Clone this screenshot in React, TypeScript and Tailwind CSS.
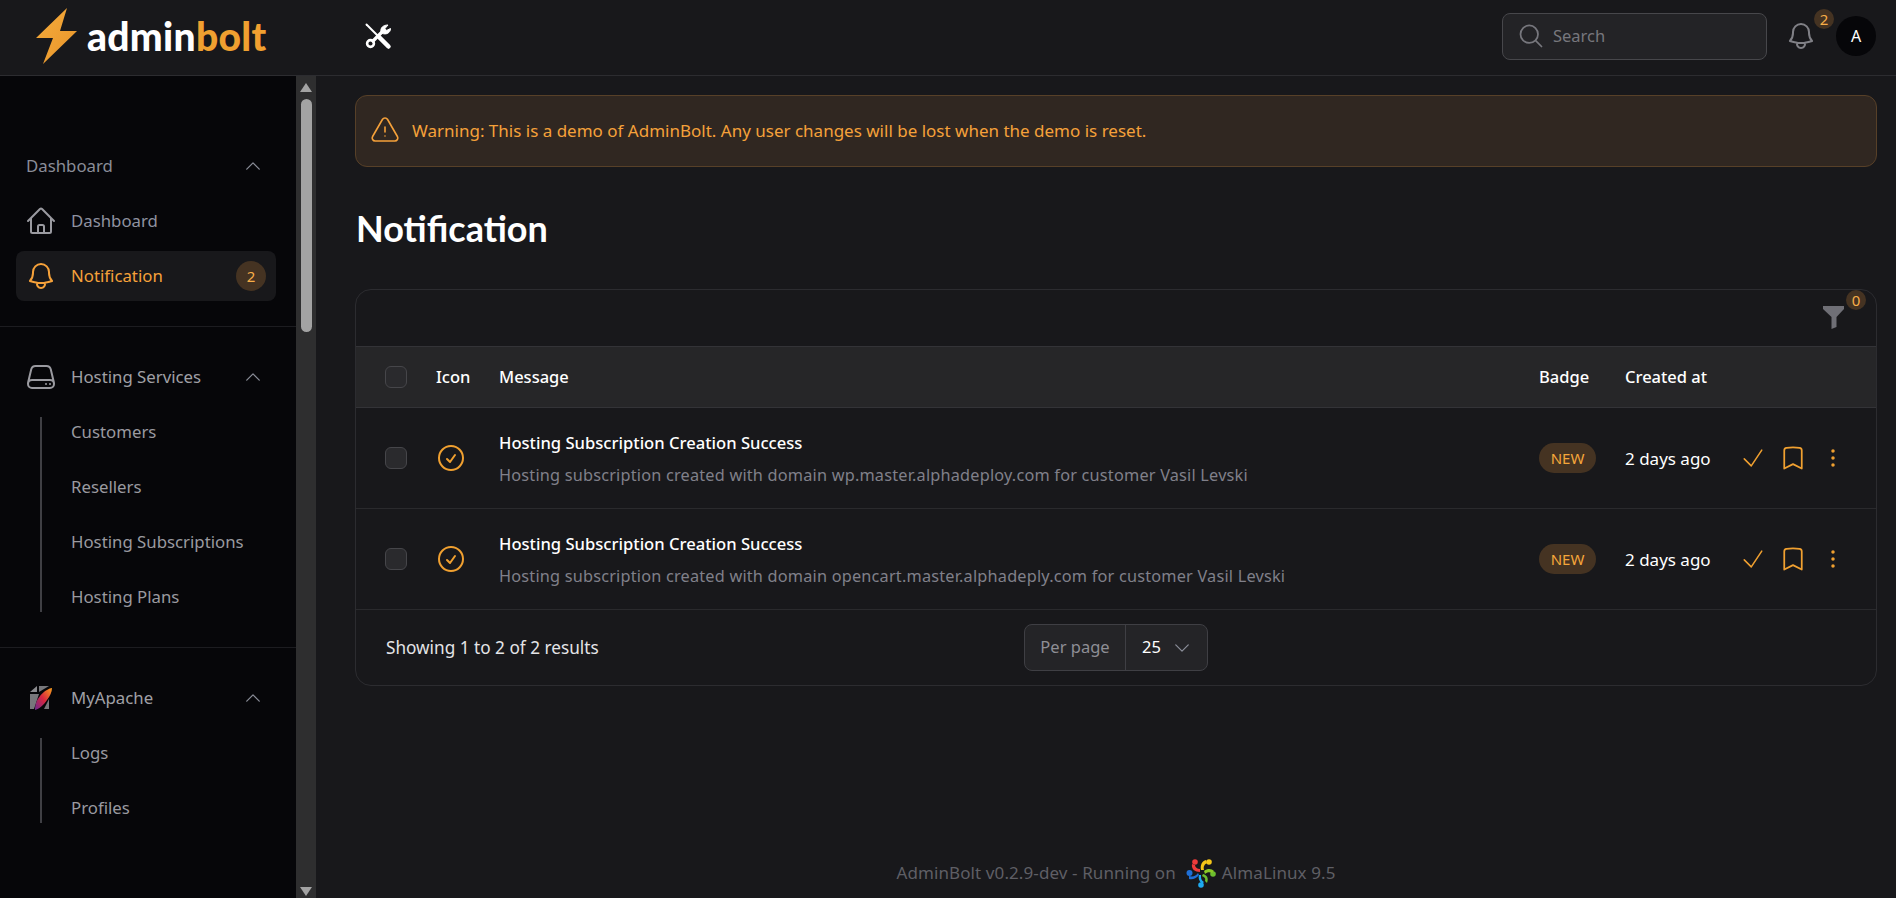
import React from 'react';
import {
  HiEllipsisVertical,
  HiOutlineBell,
  HiOutlineBookmark,
  HiOutlineCheck,
  HiOutlineCheckCircle,
  HiOutlineChevronDown,
  HiOutlineChevronUp,
  HiOutlineExclamationTriangle,
  HiOutlineHome,
  HiOutlineMagnifyingGlass,
  HiOutlineServer,
} from 'react-icons/hi2';

const BoltMark = () => (
  <svg width="41" height="56" viewBox="0 0 41 56" className="shrink-0">
    <defs>
      <linearGradient id="bolt" x1="0" y1="0" x2="1" y2="1">
        <stop offset="0" stopColor="#f5ac3c" />
        <stop offset="1" stopColor="#e8942a" />
      </linearGradient>
    </defs>
    <path d="M31 0 L0 30 L17 30 L7 56 L41 23 L24 23 Z" fill="url(#bolt)" />
  </svg>
);

const ToolsIcon = () => (
  <svg width="28" height="28" viewBox="0 0 28 28" fill="none" stroke="#fff" strokeLinecap="round" className="shrink-0">
    <path d="M2.5 2.5 L14 14" strokeWidth="2" />
    <path d="M15.5 15.5 L24.5 24.5" strokeWidth="4.5" />
    <circle cx="6.5" cy="21.5" r="3.4" strokeWidth="2.6" />
    <path d="M9 19 L18 10" strokeWidth="3.2" />
    <path d="M17 10 C16 6 19 3 24 3 L21 6.5 L22.5 8.5 L26.5 6.5 C26.5 11 22 13 18.5 11.5 Z" fill="#fff" strokeWidth="1" />
  </svg>
);

const ApacheIcon = () => (
  <svg width="24" height="26" viewBox="0 0 24 26">
    <defs>
      <linearGradient id="feather" x1="1" y1="0" x2="0" y2="1">
        <stop offset="0" stopColor="#f7a01c" />
        <stop offset="0.5" stopColor="#d9263f" />
        <stop offset="1" stopColor="#6b2a90" />
      </linearGradient>
    </defs>
    <path d="M1 7 L8 1 V7 Z" fill="#8a8a8e" />
    <path d="M1 9 H10 L5 24 H1 Z" fill="#77777b" />
    <path d="M10 1 H20 L10 7 Z" fill="#77777b" />
    <path d="M15 24 H20 V14 Z" fill="#77777b" />
    <path d="M23 3 C17 4 10 10 7 18 C6 21 6 24 6 25 C10 24 15 20 18 15 C21 11 23 7 23 3 Z" fill="url(#feather)" />
  </svg>
);

const AlmaLogo = () => (
  <svg width="30" height="30" viewBox="0 0 30 30">
    <circle cx="9" cy="4" r="2.8" fill="#ee3b3b" />
    <path d="M6 6 C5 11 9 14 14 14 L14 11 C11 11 9 9 9 7 Z" fill="#ee3b3b" />
    <circle cx="23" cy="4" r="2.8" fill="#f5c518" />
    <path d="M15 12 C14 7 16 3 20 2 L21 5 C19 6 17 8 18 12 Z" fill="#f5c518" />
    <circle cx="27" cy="16" r="2.8" fill="#6cbe2e" />
    <path d="M18 13 C22 10 26 11 28 13 L26 15 C24 14 21 14 19 16 Z" fill="#8ac926" />
    <path d="M17 16 C21 17 23 20 21 25 L19 23 C20 20 18 19 16 18 Z" fill="#6cbe2e" />
    <circle cx="15" cy="27" r="2.8" fill="#1eaaf1" />
    <path d="M15 17 C15 20 15 22 18 24 L16 26 C13 23 12 20 13 17 Z" fill="#1eaaf1" />
    <circle cx="3.5" cy="15" r="3" fill="#1f6fd6" />
    <path d="M3 18 C7 19 10 18 12 15 L13 17 C10 21 6 22 3 21 Z" fill="#1f6fd6" />
  </svg>
);

const FunnelIcon = () => (
  <svg width="21" height="23" viewBox="0 0 21 23" className="block">
    <path d="M0 0 H21 V3 L13.5 11 V21 L8.5 23 V11 L0 3 Z" fill="#6f6f76" />
  </svg>
);

const Checkbox = () => (
  <span className="block w-[22px] h-[22px] rounded-md border border-[#46464a] bg-[#2a2a2d]" />
);

const CountBadge = ({ value, className }: { value: number; className: string }) => (
  <span className={`flex items-center justify-center rounded-full bg-[#453322] text-[#f8ae48] ${className}`}>{value}</span>
);

const navGroups = [
  { title: 'Hosting Services', icon: <HiOutlineServer className="w-[32px] h-[32px] text-[#9a9aa0]" />, links: ['Customers', 'Resellers', 'Hosting Subscriptions', 'Hosting Plans'] },
  { title: 'MyApache', icon: <ApacheIcon />, links: ['Logs', 'Profiles'] },
];

const rows = [
  'Hosting subscription created with domain wp.master.alphadeploy.com for customer Vasil Levski',
  'Hosting subscription created with domain opencart.master.alphadeply.com for customer Vasil Levski',
];

const App = () => {
  return (
    <div className="h-screen overflow-hidden flex flex-col bg-[#18181b] font-['Noto_Sans',sans-serif] text-[16.5px]">
      <header className="h-[76px] shrink-0 flex items-center border-b border-[#2c2c30] pl-[36px] pr-[20px] pb-[3px]">
        <BoltMark />
        <span className="ml-[10px] text-[39px] leading-none font-black tracking-[0.3px] text-white font-['Lato',sans-serif]">
          admin<span className="text-[#f0a030]">bolt</span>
        </span>
        <span className="ml-[97px]"><ToolsIcon /></span>
        <div className="ml-auto flex items-center">
          <div className="w-[265px] h-[47px] flex items-center gap-[8px] pl-[14px] rounded-lg border border-[#47474b] bg-[#232326] text-[#77777d]">
            <HiOutlineMagnifyingGlass className="w-[28px] h-[28px]" />
            <span>Search</span>
          </div>
          <div className="relative ml-[18px] mr-[19px]">
            <HiOutlineBell className="w-[32px] h-[32px] text-[#808086]" />
            <CountBadge value={2} className="absolute -top-[11px] left-[29px] w-[20px] h-[20px] text-[15px]" />
          </div>
          <div className="w-[40px] h-[40px] rounded-full bg-[#060609] flex items-center justify-center text-white text-[16px]">A</div>
        </div>
      </header>

      <div className="flex-1 flex min-h-0">
        <aside className="w-[296px] shrink-0 bg-[#060609] pt-[73px] text-[16.8px]">
          <div className="pl-[16px] pr-[20px]">
            <div className="flex items-center justify-between pl-[10px] pr-[13px] h-[34px] text-[#8a8d98]">
              <span>Dashboard</span>
              <HiOutlineChevronUp className="w-[20px] h-[20px]" />
            </div>
            <div className="mt-[13px] h-[50px] flex items-center gap-[14px] pl-[9px] text-[#8f92a0]">
              <HiOutlineHome className="w-[32px] h-[32px] text-[#9a9aa0]" />
              <span>Dashboard</span>
            </div>
            <div className="mt-[5px] h-[50px] flex items-center gap-[14px] pl-[9px] pr-[10px] rounded-lg bg-[#18181b] text-[#f5a13a]">
              <HiOutlineBell className="w-[32px] h-[32px]" />
              <span>Notification</span>
              <CountBadge value={2} className="ml-auto w-[30px] h-[30px] text-[15px]" />
            </div>
          </div>
          {navGroups.map((group) => (
            <div key={group.title} className="mt-[25px] border-t border-[#1c1c20] pt-[33px] pb-[35px] -mb-[25px] pl-[16px] pr-[20px]">
              <div className="flex items-center h-[34px] gap-[14px] pl-[9px] pr-[13px] text-[#a0a0a6]">
                <span className="w-[32px] flex justify-center">{group.icon}</span>
                <span>{group.title}</span>
                <HiOutlineChevronUp className="ml-auto w-[20px] h-[20px] text-[#8a8d98]" />
              </div>
              <div className="ml-[24px] mt-[23px] border-l-2 border-[#3f3f44] pl-[29px]">
                {group.links.map((link) => (
                  <div key={link} className="h-[30px] mb-[25px] last:mb-0 flex items-center text-[#9a9aa0]">{link}</div>
                ))}
              </div>
            </div>
          ))}
        </aside>

        <div className="w-[20px] shrink-0 bg-[#2e2e2f] flex flex-col items-center pt-[7px] pb-[2px]">
          <span className="w-0 h-0 border-x-[6px] border-x-transparent border-b-[9px] border-b-[#a3a3a3]" />
          <span className="mt-[7px] w-[11px] h-[233px] rounded-full bg-[#a3a3a3]" />
          <span className="mt-auto w-0 h-0 border-x-[6px] border-x-transparent border-t-[9px] border-t-[#a3a3a3]" />
        </div>

        <main className="flex-1 min-w-0 flex flex-col pl-[39px] pr-[19px] pt-[19px]">
          <div className="h-[72px] flex items-center gap-[11px] pl-[13px] rounded-xl border border-[#574028] bg-[#302721] text-[#f5a13a] text-[17px]">
            <HiOutlineExclamationTriangle className="w-[32px] h-[32px] stroke-[1.2]" />
            <span>Warning: This is a demo of AdminBolt. Any user changes will be lost when the demo is reset.</span>
          </div>

          <h1 className="mt-[39px] text-[36px] leading-[45px] font-bold text-white pl-[1px] font-['Lato',sans-serif]">Notification</h1>

          <section className="mt-[38px] rounded-2xl border border-[#2c2c30]">
            <div className="h-[56px] flex justify-end pr-[32px] pt-[16px]">
              <div className="relative h-[23px]">
                <FunnelIcon />
                <CountBadge value={0} className="absolute -top-[16px] left-[23px] w-[20px] h-[20px] text-[15px]" />
              </div>
            </div>
            <table className="w-full table-fixed border-collapse">
              <thead>
                <tr className="h-[61px] bg-[#262628] border-y border-[#333337] text-white text-left">
                  <th className="w-[80px] font-medium"><div className="flex justify-center"><Checkbox /></div></th>
                  <th className="w-[63px] font-medium pt-[1px]">Icon</th>
                  <th className="font-medium pt-[1px]">Message</th>
                  <th className="w-[86px] font-medium pt-[1px]">Badge</th>
                  <th className="w-[251px] font-medium pt-[1px]">Created at</th>
                </tr>
              </thead>
              <tbody>
                {rows.map((message) => (
                  <tr key={message} className="h-[101px] border-b border-[#2a2a2d]">
                    <td><div className="flex justify-center"><Checkbox /></div></td>
                    <td><HiOutlineCheckCircle className="-ml-[1px] w-[32px] h-[32px] text-[#f0a030]" /></td>
                    <td className="pt-[1px]">
                      <div className="leading-[24px] font-medium text-white text-[16.6px]">Hosting Subscription Creation Success</div>
                      <div className="mt-[8px] leading-[24px] text-[#80808a] text-[16.3px] tracking-[0.2px]">{message}</div>
                    </td>
                    <td>
                      <span className="inline-flex items-center justify-center w-[57px] h-[30px] rounded-full bg-[#453322] text-[#f5a63a] text-[15px]">NEW</span>
                    </td>
                    <td>
                      <div className="flex items-center gap-[12px] text-white">
                        <span className="w-[102px] pt-[1px] whitespace-nowrap text-[17px]">2 days ago</span>
                        <HiOutlineCheck className="w-[28px] h-[28px] text-[#f0a030] stroke-[1.3]" />
                        <HiOutlineBookmark className="w-[28px] h-[28px] text-[#f0a030]" />
                        <HiEllipsisVertical className="w-[28px] h-[28px] text-[#f0a030]" />
                      </div>
                    </td>
                  </tr>
                ))}
              </tbody>
            </table>
            <div className="h-[75px] grid grid-cols-3 items-center px-[30px] text-[#e4e4e7]">
              <span className="whitespace-nowrap text-[17.2px]">Showing 1 to 2 of 2 results</span>
              <div className="flex justify-center">
                <div className="h-[47px] flex items-stretch rounded-lg border border-[#3f3f44] bg-[#242427] overflow-hidden">
                  <span className="w-[101px] flex items-center justify-center border-r border-[#3f3f44] text-[#8e8e95]">Per page</span>
                  <span className="w-[81px] flex items-center pl-[16px] gap-[11px] text-white">
                    25 <HiOutlineChevronDown className="w-[20px] h-[20px] text-[#8a8d98]" />
                  </span>
                </div>
              </div>
            </div>
          </section>

          <footer className="mt-auto h-[52px] flex items-center justify-center text-[#5f5f65] pt-[1px] text-[17px] tracking-[0.1px]">
            <span>AdminBolt v0.2.9-dev - Running on</span>
            <span className="ml-[10px] mr-[6px]"><AlmaLogo /></span>
            <span>AlmaLinux 9.5</span>
          </footer>
        </main>
      </div>
    </div>
  );
};

export default App;
